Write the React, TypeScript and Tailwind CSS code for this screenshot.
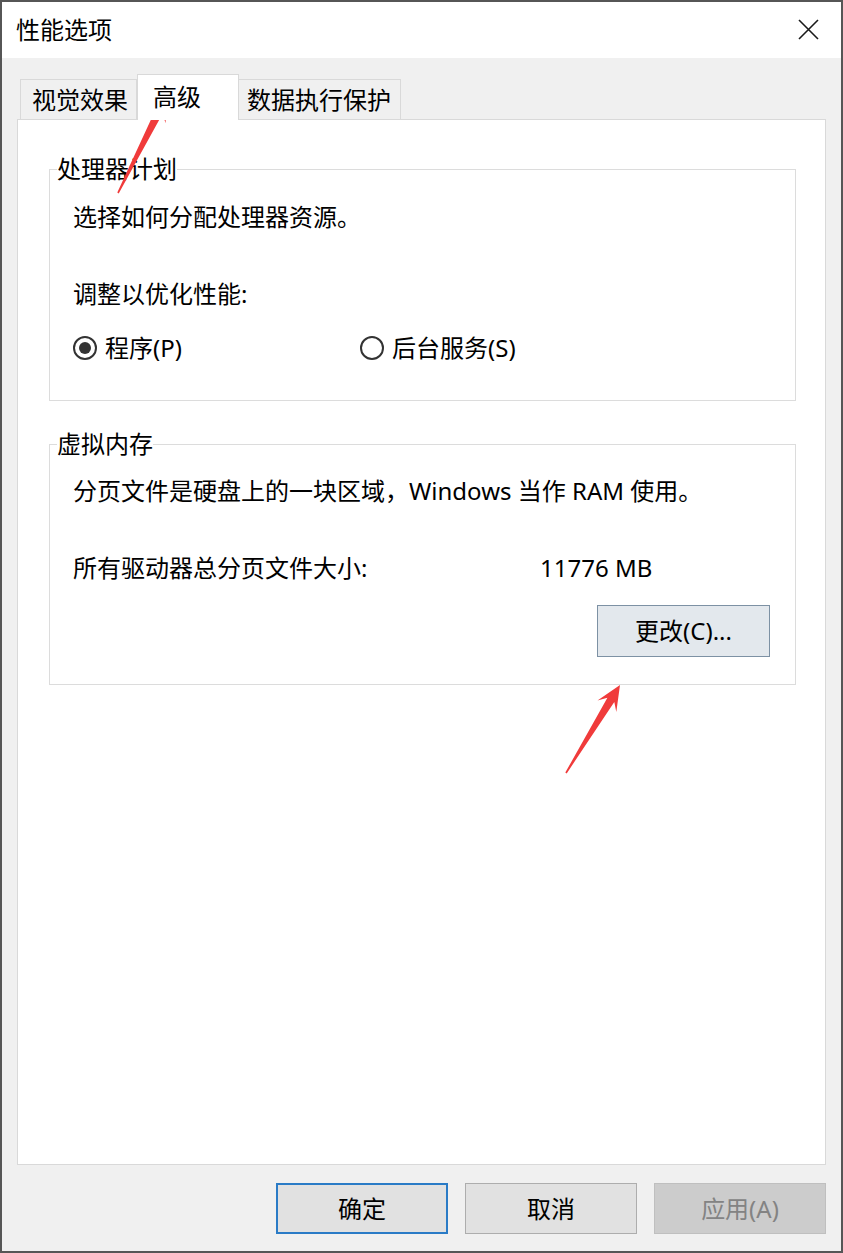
import React from "react";

const FONT = { fontFamily: '"Noto Sans", "Noto Sans CJK SC", "Microsoft YaHei", sans-serif' };

// red callout arrow: tapered shaft with a notched head, from tail to tip
function arrowPoints(tx: number, ty: number, px: number, py: number): string {
  const len = Math.hypot(px - tx, py - ty);
  const dx = (px - tx) / len;
  const dy = (py - ty) / len;
  const nx = -dy;
  const ny = dx;
  const headLen = 25;
  const headHalf = 11;
  const shaftHalf = 4;
  const notch = headLen * 0.7;
  const pts = [
    [px, py],
    [px - dx * headLen + nx * headHalf, py - dy * headLen + ny * headHalf],
    [px - dx * notch + nx * shaftHalf, py - dy * notch + ny * shaftHalf],
    [tx + nx * 0.8, ty + ny * 0.8],
    [tx - nx * 0.8, ty - ny * 0.8],
    [px - dx * notch - nx * shaftHalf, py - dy * notch - ny * shaftHalf],
    [px - dx * headLen - nx * headHalf, py - dy * headLen - ny * headHalf],
  ];
  return pts.map((p) => `${p[0].toFixed(1)},${p[1].toFixed(1)}`).join(" ");
}

function Radio({ checked, label }: { checked?: boolean; label: string }) {
  return (
    <div className="flex items-center gap-[8px]">
      <span className="w-[24px] h-[24px] rounded-full border-2 border-[#333333] flex items-center justify-center">
        {checked && <span className="w-[12px] h-[12px] rounded-full bg-[#333333]" />}
      </span>
      <span>{label}</span>
    </div>
  );
}

export default function App() {
  return (
    <div
      style={FONT}
      className="relative w-[843px] h-[1253px] border-2 border-[#565656] flex flex-col text-[24px] leading-[24px] text-black overflow-hidden"
    >
      {/* title bar */}
      <div className="h-[56px] bg-white flex items-center justify-between pl-[14px] pr-[22px] pb-[1px] shrink-0">
        <span>性能选项</span>
        <svg width="21" height="21" viewBox="0 0 21 21">
          <path d="M1 1 L20 20 M20 1 L1 20" stroke="#1a1a1a" strokeWidth="1.6" />
        </svg>
      </div>

      <div className="flex-1 bg-[#f0f0f0] flex flex-col pt-[16px]">
        {/* tabs */}
        <div className="flex items-end pl-[18px] h-[45px]">
          <div className="w-[117px] h-[40px] border border-b-0 border-[#d9d9d9] bg-[#f0f0f0] flex items-center pt-[1px] pl-[11px]">
            视觉效果
          </div>
          <div className="relative z-10 -mb-px w-[102px] h-[46px] border border-b-0 border-[#d9d9d9] bg-white flex items-start pt-[10px] pl-[15px]">
            高级
          </div>
          <div className="w-[162px] h-[40px] border border-b-0 border-l-0 border-[#d9d9d9] bg-[#f0f0f0] flex items-center pt-[1px] pl-[8px]">
            数据执行保护
          </div>
        </div>

        {/* tab page */}
        <div className="mx-[15px] h-[1046px] shrink-0 bg-white border border-[#d9d9d9] pl-[31px] pt-[37px]">
          <fieldset className="w-[747px] border border-[#dcdcdc] pl-[23px] pb-[40px]">
            <legend className="ml-[-16px]">处理器计划</legend>
            <p className="mt-[24px]">选择如何分配处理器资源。</p>
            <p className="mt-[53px]">调整以优化性能:</p>
            <div className="mt-[30px] flex">
              <div className="w-[287px]">
                <Radio checked label="程序(P)" />
              </div>
              <Radio label="后台服务(S)" />
            </div>
          </fieldset>

          <fieldset className="mt-[31px] w-[747px] border border-[#dcdcdc] pl-[23px] pr-[25px] pb-[27px]">
            <legend className="ml-[-16px]">虚拟内存</legend>
            <p className="mt-[23px]">分页文件是硬盘上的一块区域，Windows 当作 RAM 使用。</p>
            <div className="mt-[53px] flex">
              <span className="w-[467px]">所有驱动器总分页文件大小:</span>
              <span>11776 MB</span>
            </div>
            <div className="mt-[25px] flex justify-end">
              <button className="w-[173px] h-[52px] bg-[#e3e8ed] border border-[#7d91a4] flex items-center justify-center">
                更改(C)...
              </button>
            </div>
          </fieldset>
        </div>

        {/* dialog buttons */}
        <div className="mt-[18px] flex justify-end gap-[17px] pr-[15px]">
          <button className="w-[172px] h-[51px] bg-[#e1e1e1] border-2 border-[#2a7bc6] flex items-center justify-center">
            确定
          </button>
          <button className="w-[172px] h-[51px] bg-[#e1e1e1] border border-[#adadad] flex items-center justify-center">
            取消
          </button>
          <button className="w-[172px] h-[51px] bg-[#cccccc] border border-[#bfbfbf] text-[#838383] flex items-center justify-center">
            应用(A)
          </button>
        </div>
      </div>

      {/* callout arrows */}
      <svg className="absolute left-[-2px] top-[-2px] pointer-events-none" width="843" height="1253">
        <polygon points={arrowPoints(118, 193, 167, 96)} fill="#f03b3b" />
        <polygon points={arrowPoints(566, 773, 620, 685)} fill="#f03b3b" />
      </svg>
    </div>
  );
}
